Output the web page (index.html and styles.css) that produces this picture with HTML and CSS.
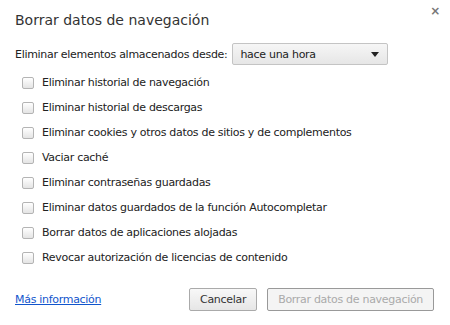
FILE: index.html
```html
<!DOCTYPE html>
<html lang="es">
<head>
    <meta charset="UTF-8">
    <title>Borrar datos de navegación</title>
    <link rel="stylesheet" href="styles.css">
</head>
<body>
    <div class="dialog">
        <div class="dialog-header">
            <h1 class="dialog-title">Borrar datos de navegación</h1>
            <span class="close-button">&times;</span>
        </div>
        <div class="time-row">
            <label class="time-label">Eliminar elementos almacenados desde:</label>
            <div class="select">
                <span class="select-text">hace una hora</span>
                <span class="select-arrow"></span>
            </div>
        </div>
        <ul class="option-list">
            <li class="option"><span class="checkbox"></span>Eliminar historial de navegación</li>
            <li class="option"><span class="checkbox"></span>Eliminar historial de descargas</li>
            <li class="option"><span class="checkbox"></span>Eliminar cookies y otros datos de sitios y de complementos</li>
            <li class="option"><span class="checkbox"></span>Vaciar caché</li>
            <li class="option"><span class="checkbox"></span>Eliminar contraseñas guardadas</li>
            <li class="option"><span class="checkbox"></span>Eliminar datos guardados de la función Autocompletar</li>
            <li class="option"><span class="checkbox"></span>Borrar datos de aplicaciones alojadas</li>
            <li class="option"><span class="checkbox"></span>Revocar autorización de licencias de contenido</li>
        </ul>
        <div class="dialog-footer">
            <a href="#" class="more-link">Más información</a>
            <div class="buttons">
                <button class="button">Cancelar</button>
                <button class="button disabled">Borrar datos de navegación</button>
            </div>
        </div>
    </div>
</body>
</html>
```

FILE: styles.css
```css
body {
    margin: 0;
    font-family: 'DejaVu Sans', sans-serif;
    font-size: 11px;
    letter-spacing: -0.3px;
    color: #222222;
    background-color: #FFFFFF;
}
.dialog {
    width: 450px;
    height: 325px;
    box-sizing: border-box;
    padding: 0 16px 0 15px;
    display: flex;
    flex-direction: column;
}
.dialog-header {
    display: flex;
    justify-content: space-between;
    align-items: flex-start;
    height: 42px;
}
.dialog-title {
    margin: 12px 0 0;
    font-size: 14px;
    font-weight: normal;
    letter-spacing: 0;
    color: #333333;
}
.close-button {
    margin: 4px -6px 0 0;
    font-size: 12px;
    font-weight: bold;
    color: #777777;
}
.time-row {
    display: flex;
    align-items: center;
    height: 24px;
}
.time-label {
    margin-right: 5px;
}
.select {
    width: 156px;
    height: 22px;
    box-sizing: border-box;
    border: 1px solid #C4C4C4;
    border-radius: 2px;
    background: linear-gradient(#F6F6F6, #E6E6E6);
    display: flex;
    align-items: center;
    justify-content: space-between;
    padding: 0 8px 0 7px;
}
.select-arrow {
    width: 0;
    height: 0;
    border-left: 4px solid transparent;
    border-right: 4px solid transparent;
    border-top: 5px solid #222222;
}
.option-list {
    list-style: none;
    margin: 4px 0 0;
    padding: 0 0 0 7px;
}
.option {
    display: flex;
    align-items: center;
    height: 25px;
}
.checkbox {
    width: 12px;
    height: 12px;
    box-sizing: border-box;
    border: 1px solid #B4B4B4;
    border-radius: 2px;
    background: linear-gradient(#FFFFFF, #E4E4E4);
    margin-right: 8px;
}
.dialog-footer {
    margin-top: auto;
    margin-bottom: 14px;
    display: flex;
    justify-content: space-between;
    align-items: center;
}
.more-link {
    color: #1155CC;
    text-decoration: underline;
}
.buttons {
    display: flex;
    gap: 10px;
}
.button {
    height: 23px;
    padding: 0 10px;
    font-family: inherit;
    font-size: 11px;
    letter-spacing: inherit;
    color: #333333;
    border: 1px solid #AAAAAA;
    border-radius: 2px;
    background: linear-gradient(#F8F8F8, #E6E6E6);
}
.button.disabled {
    color: #AAAAAA;
    border-color: #999999;
    background: #F4F4F4;
}
```
